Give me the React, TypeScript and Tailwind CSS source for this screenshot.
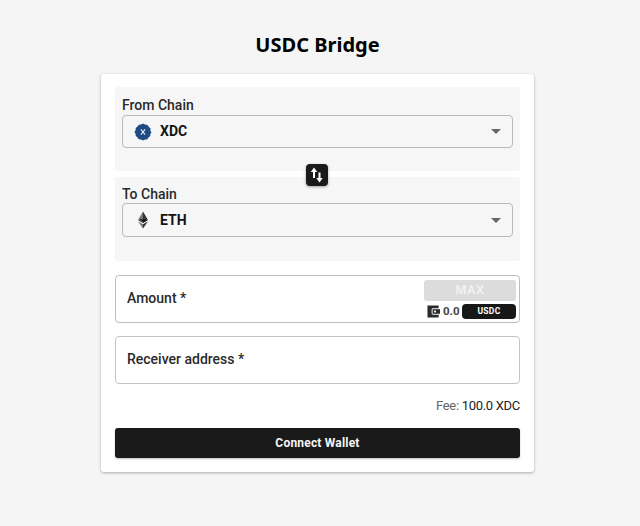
import type { ReactNode } from "react";

const roboto = "font-['Roboto',sans-serif]";

function XdcIcon() {
  return (
    <svg viewBox="0 0 18 18" className="h-[18px] w-[18px] shrink-0">
      <path d="M9 .5 11 1.6 13.5 1.9 14.9 4 16.6 5.5 16.4 8 17.5 9 16.4 11 16.2 13 14.5 14.5 13 16.4 11 16.5 9 17.5 7 16.5 4.8 16.2 3.5 14.5 1.7 12.8 1.6 11 .5 9 1.6 7 1.8 5 3.5 3.5 5 1.7 7 1.6z" fill="#1f4b85" />
      <path d="M6.9 6.4 11.1 11.6M11.1 6.4 6.9 11.6" stroke="#e8eef6" strokeWidth="1.1" fill="none" />
    </svg>
  );
}

function EthIcon() {
  return (
    <svg viewBox="0 0 18 18" className="h-[18px] w-[18px] shrink-0">
      <path d="M9 .5 4 9 9 7z" fill="#777" />
      <path d="M9 .5 14 9 9 7z" fill="#333" />
      <path d="M4 9 9 12 9 7z" fill="#333" />
      <path d="M14 9 9 12 9 7z" fill="#111" />
      <path d="M4 10.2 9 17.5 9 13.2z" fill="#777" />
      <path d="M14 10.2 9 17.5 9 13.2z" fill="#333" />
    </svg>
  );
}

function WalletIcon() {
  return (
    <svg viewBox="0 0 14 14" className="h-[13px] w-[13px] shrink-0">
      <path d="M.5.5h12v3H6.5A1.5 1.5 0 0 0 5 5v4a1.5 1.5 0 0 0 1.5 1.5h6v3H.5z" fill="#2b2b2b" />
      <path d="M6 4.5h8v5H6z" fill="#2b2b2b" />
      <rect x="7.6" y="6" width="2" height="2" fill="#fff" />
    </svg>
  );
}

function SwapIcon() {
  return (
    <svg viewBox="0 0 22 22" className="h-[22px] w-[22px]">
      <path d="M8 14V7" stroke="#fff" strokeWidth="2" fill="none" />
      <path d="M8 3.5 11.2 8H4.8z" fill="#fff" />
      <path d="M13.5 8.5V15" stroke="#fff" strokeWidth="2" fill="none" />
      <path d="M13.5 18.5 10.3 14H16.7z" fill="#fff" />
    </svg>
  );
}

function ChainPanel({ label, name, icon, className, selectClass }: { label: string; name: string; icon: ReactNode; className: string; selectClass: string }) {
  return (
    <div className={`h-[84px] rounded-[3px] bg-[#f6f6f6] px-[7px] ${className}`}>
      <div className="text-[14px] leading-[18px] font-medium text-[#2a2a2a]">{label}</div>
      <div className={`flex items-center rounded-[4px] border border-[#b9b9b9] pr-[11px] pl-[11px] ${selectClass}`}>
        {icon}
        <span className="ml-[8px] text-[14px] font-bold text-[#141414]">{name}</span>
        <span className="ml-auto h-0 w-0 border-x-[5px] border-t-[5px] border-x-transparent border-t-[#666]" />
      </div>
    </div>
  );
}

export default function App() {
  return (
    <div className={`flex min-h-[526px] flex-col items-center bg-[#f5f5f5] pt-[30px] pr-[5px] ${roboto}`}>
      <h1 className="mb-[15px] font-['Noto_Sans',sans-serif] text-[20px] leading-[29px] font-bold text-black">USDC Bridge</h1>
      <div className="flex h-[398px] w-[433px] flex-col rounded-[3px] bg-white px-[14px] pt-[13px] shadow-[0_1px_3px_rgba(0,0,0,0.3)]">
        <div className="relative flex flex-col gap-[6px]">
          <ChainPanel label="From Chain" name="XDC" icon={<XdcIcon />} className="pt-[9px]" selectClass="mt-[1px] h-[33px]" />
          <ChainPanel label="To Chain" name="ETH" icon={<EthIcon />} className="pt-[8px]" selectClass="h-[34px]" />
          <button className="absolute top-[77px] left-[191px] flex h-[22px] w-[22px] items-center justify-center rounded-[4px] bg-[#1a1a1a] shadow-[0_1px_3px_rgba(0,0,0,0.35)]">
            <SwapIcon />
          </button>
        </div>

        <div className="mt-[14px] flex h-[48px] items-center justify-between rounded-[4px] border border-[#bdbdbd] pr-[3px] pl-[11px]">
          <span className="pb-[2px] text-[14px] font-medium text-[#2a2a2a]">Amount *</span>
          <div className="flex w-[92px] flex-col gap-[3px]">
            <div className="flex h-[21px] items-center justify-center rounded-[3px] bg-[#dcdcdc] text-[12.5px] font-bold tracking-[0.5px] text-[#f1f1f1]">MAX</div>
            <div className="flex items-center">
              <div className="ml-[3px]">
                <WalletIcon />
              </div>
              <span className="ml-[3px] text-[11.5px] leading-[15px] font-bold text-[#444]">0.0</span>
              <div className="ml-auto flex h-[15px] w-[54px] items-center justify-center rounded-[4px] bg-[#171717] text-[8.5px] font-bold tracking-[0.3px] text-white">USDC</div>
            </div>
          </div>
        </div>

        <div className="mt-[13px] flex h-[48px] items-center rounded-[4px] border border-[#c4c4c4] pl-[11px]">
          <span className="pb-[2px] text-[14px] font-medium text-[#2a2a2a]">Receiver address *</span>
        </div>

        <div className="mt-[13px] text-right text-[13px] leading-[18px] tracking-[-0.3px] text-[#222]">
          <span className="text-[#666]">Fee:</span> 100.0 XDC
        </div>

        <button className="mt-[13px] h-[30px] rounded-[3px] bg-[#1a1a1a] text-[12px] font-bold tracking-[0.2px] text-[#f5f5f5] shadow-[0_1px_2px_rgba(0,0,0,0.25)]">
          Connect Wallet
        </button>
      </div>
    </div>
  );
}
